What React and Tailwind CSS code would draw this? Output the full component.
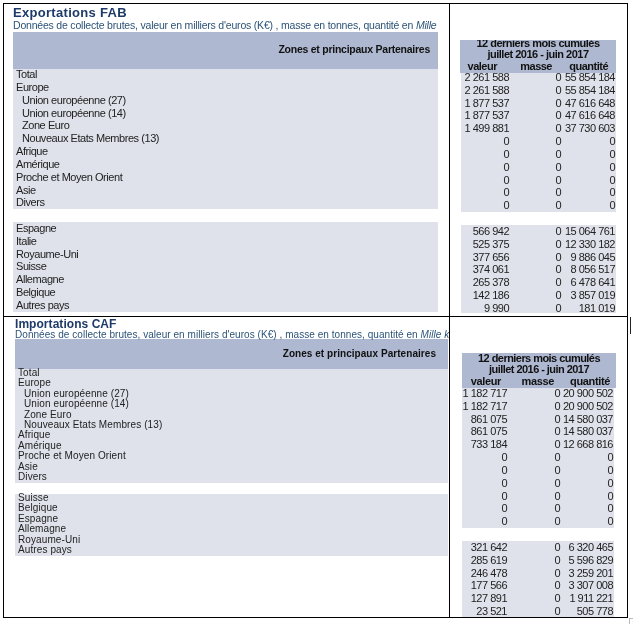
const zonesTop = [
  ["Total", 0], ["Europe", 0], ["Union européenne (27)", 1], ["Union européenne (14)", 1], ["Zone Euro", 1],
  ["Nouveaux Etats Membres (13)", 1], ["Afrique", 0], ["Amérique", 0], ["Proche et Moyen Orient", 0], ["Asie", 0], ["Divers", 0],
];
const paysTop = ["Espagne", "Italie", "Royaume-Uni", "Suisse", "Allemagne", "Belgique", "Autres pays"];
const paysBottom = ["Suisse", "Belgique", "Espagne", "Allemagne", "Royaume-Uni", "Autres pays"];

const zero = ["0", "0", "0"];
const exportsZones = [
  ["2 261 588", "0", "55 854 184"], ["2 261 588", "0", "55 854 184"], ["1 877 537", "0", "47 616 648"],
  ["1 877 537", "0", "47 616 648"], ["1 499 881", "0", "37 730 603"], zero, zero, zero, zero, zero, zero,
];
const exportsPays = [
  ["566 942", "0", "15 064 761"], ["525 375", "0", "12 330 182"], ["377 656", "0", "9 886 045"], ["374 061", "0", "8 056 517"],
  ["265 378", "0", "6 478 641"], ["142 186", "0", "3 857 019"], ["9 990", "0", "181 019"],
];
const importsZones = [
  ["1 182 717", "0", "20 900 502"], ["1 182 717", "0", "20 900 502"], ["861 075", "0", "14 580 037"],
  ["861 075", "0", "14 580 037"], ["733 184", "0", "12 668 816"], zero, zero, zero, zero, zero, zero,
];
const importsPays = [
  ["321 642", "0", "6 320 465"], ["285 619", "0", "5 596 829"], ["246 478", "0", "3 259 201"], ["177 566", "0", "3 307 008"],
  ["127 891", "0", "1 911 221"], ["23 521", "0", "505 778"],
];

const Labels = ({ rows, rowClass }) => (
  <>
    {rows.map(([name, indent]) => (
      <div key={name} className={`${rowClass} whitespace-nowrap ${indent ? "pl-[6px]" : ""}`}>{name}</div>
    ))}
  </>
);

const Numbers = ({ rows, cols }) => (
  <>
    {rows.map((r, i) => (
      <div key={i} className={`grid h-[12.82px] ${cols} items-center text-right leading-[12.82px] tracking-[-0.5px] whitespace-nowrap`}>
        <span>{r[0]}</span>
        <span>{r[1]}</span>
        <span>{r[2]}</span>
      </div>
    ))}
  </>
);

const App = () => (
  <div className="relative h-[624px] w-[633px] bg-white pt-[3px] pl-[3px] font-['Liberation_Sans',Arial,sans-serif] text-[11px] text-[#222] blur-[0.25px]">
    <div className="grid h-[615px] w-[625px] grid-cols-[446px_1fr] grid-rows-[313px_1fr] border border-black">
      {/* Exportations, zones */}
      <div className="overflow-hidden border-r border-b border-black pt-[2px] pl-[9px]">
        <div className="h-[13px] text-[13px] leading-[13px] font-bold tracking-[0.3px] text-[#1d3a68]">Exportations FAB</div>
        <div className="h-[13px] w-[425px] overflow-hidden text-[10.5px] leading-[12px] tracking-[-0.2px] whitespace-nowrap text-[#2c5378]">
          Données de collecte brutes, valeur en milliers d'euros (K€) , masse en tonnes, quantité en <i>Mille .</i>
        </div>
        <div className="w-[425px]">
          <div className="flex h-[37px] items-center justify-end bg-[#aeb8d0] pr-[8px] pb-[2px] text-[10.5px] font-bold tracking-[-0.25px] text-[#111]">
            Zones et principaux Partenaires
          </div>
          <div className="h-[140px] bg-[#dfe2ea] pl-[3px] tracking-[-0.45px]">
            <Labels rows={zonesTop} rowClass="h-[12.85px] leading-[12.85px] -translate-y-[1px]" />
          </div>
          <div className="mt-[13px] h-[90px] bg-[#dfe2ea] pl-[3px] tracking-[-0.45px]">
            <Labels rows={paysTop.map((p) => [p, 0])} rowClass="h-[12.77px] leading-[12.77px]" />
          </div>
        </div>
      </div>

      {/* Exportations, valeurs */}
      <div className="border-b border-black pt-[36px] pl-[11px]">
        <div className="-ml-[1px] h-[33px] w-[156px] overflow-hidden bg-[#aeb8d0] text-center font-bold tracking-[-0.5px] text-[#111]">
          <div className="-mt-[2px] h-[10.5px] leading-[10.5px]">12 derniers mois cumulés</div>
          <div className="h-[11.5px] leading-[11.5px]">juillet 2016 - juin 2017</div>
          <div className="grid h-[13px] grid-cols-[37px_55px_56px] leading-[13px]">
            <span className="text-right">valeur</span>
            <span className="text-right">masse</span>
            <span className="text-right">quantité</span>
          </div>
        </div>
        <div className="h-[139px] w-[155px] bg-[#dfe2ea]">
          <div className="-translate-y-[2px]">
            <Numbers rows={exportsZones} cols="grid-cols-[48px_52px_54px]" />
          </div>
        </div>
        <div className="mt-[13px] h-[88px] w-[155px] bg-[#dfe2ea]">
          <Numbers rows={exportsPays} cols="grid-cols-[48px_52px_54px]" />
        </div>
      </div>

      {/* Importations, zones */}
      <div className="overflow-hidden border-r border-black pt-[2px] pl-[11px]">
        <div className="h-[11px] text-[12px] leading-[11px] font-bold tracking-[0.05px] text-[#1d3a68]">Importations CAF</div>
        <div className="h-[9px] text-[10px] leading-[10px] tracking-[0.05px] whitespace-nowrap text-[#2c5378]">
          Données de collecte brutes, valeur en milliers d'euros (K€) , masse en tonnes, quantité en <i>Mille k</i>
        </div>
        <div className="w-[433px]">
          <div className="flex h-[30px] items-center justify-end bg-[#aeb8d0] pr-[12px] pb-[2px] text-[10px] font-bold tracking-[0.05px] text-[#111]">
            Zones et principaux Partenaires
          </div>
          <div className="h-[114px] bg-[#dfe2ea] pl-[3px] text-[10px] tracking-[0.1px]">
            <Labels rows={zonesTop} rowClass="h-[10.4px] leading-[10.4px] -translate-y-[1px]" />
          </div>
          <div className="mt-[11px] h-[62px] bg-[#dfe2ea] pl-[3px] text-[10px] tracking-[0.1px]">
            <Labels rows={paysBottom.map((p) => [p, 0])} rowClass="h-[10.45px] leading-[10.45px] -translate-y-[1.5px]" />
          </div>
        </div>
      </div>

      {/* Importations, valeurs */}
      <div className="overflow-hidden pt-[36px] pl-[12px]">
        <div className="h-[35px] w-[154px] overflow-hidden bg-[#aeb8d0] text-center font-bold tracking-[-0.55px] text-[#111]">
          <div className="h-[11px] leading-[11px]">12 derniers mois cumulés</div>
          <div className="h-[11px] leading-[11px]">juillet 2016 - juin 2017</div>
          <div className="grid h-[13px] grid-cols-[39px_53px_56px] leading-[13px] tracking-[-0.35px]">
            <span className="text-right">valeur</span>
            <span className="text-right">masse</span>
            <span className="text-right">quantité</span>
          </div>
        </div>
        <div className="h-[140px] w-[152px] bg-[#dfe2ea]">
          <div className="-translate-y-[1px]">
            <Numbers rows={importsZones} cols="grid-cols-[45px_53px_53px]" />
          </div>
        </div>
        <div className="mt-[13px] h-[77px] w-[152px] bg-[#dfe2ea]">
          <Numbers rows={importsPays} cols="grid-cols-[45px_53px_53px]" />
        </div>
      </div>
    </div>

    {/* stray marks left by the capture around the table */}
    <div className="absolute top-[317px] left-[630px] h-[17px] w-px bg-[#222]" />
    <div className="absolute top-[618px] left-[629px] h-[6px] w-[4px] border-t border-l border-[#bbb]" />
  </div>
);

export default App;
